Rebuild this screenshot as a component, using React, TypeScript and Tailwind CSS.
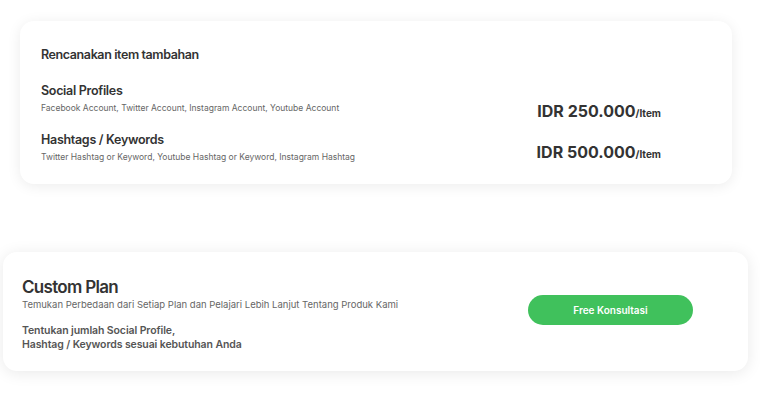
import React from 'react';

const addons = [
  {
    title: 'Social Profiles',
    desc: 'Facebook Account, Twitter Account, Instagram Account, Youtube Account',
    price: 'IDR 250.000',
  },
  {
    title: 'Hashtags / Keywords',
    desc: 'Twitter Hashtag or Keyword, Youtube Hashtag or Keyword, Instagram Hashtag',
    price: 'IDR 500.000',
  },
];

const App: React.FC = () => {
  return (
    <div className="w-[760px] h-[414px] bg-white overflow-hidden font-['Inter',sans-serif] text-[#333]">
      <div className="pt-[21px] pl-[20px]">
        <div className="w-[712px] h-[163px] bg-white rounded-[14px] shadow-[0_2px_14px_rgba(0,0,0,0.08)] pl-[21px] pt-[26px]">
          <h3 className="text-[12.5px] font-semibold leading-[16px] tracking-[-0.4px] text-[#333]">Rencanakan item tambahan</h3>
          <div className="flex">
            <div className="w-[474px] mt-[20px] flex flex-col gap-[18px]">
              {addons.map((a) => (
                <div key={a.title}>
                  <p className="text-[12.5px] font-semibold leading-[16px] tracking-[-0.3px] text-[#333]">{a.title}</p>
                  <p className="mt-[3px] text-[8.5px] leading-[12px] text-[#666]">{a.desc}</p>
                </div>
              ))}
            </div>
            <div className="w-[146px] mt-[37px] flex flex-col items-end gap-[17px]">
              {addons.map((a) => (
                <p key={a.price} className="leading-[22px] whitespace-nowrap">
                  <span className="text-[16px] font-bold text-[#333]">{a.price}</span>
                  <span className="text-[10px] font-bold text-[#333]">/Item</span>
                </p>
              ))}
            </div>
          </div>
        </div>
      </div>
      <div className="mt-[68px] pl-[3px]">
        <div className="w-[745px] h-[119px] bg-white rounded-[14px] shadow-[0_2px_16px_rgba(0,0,0,0.09)] pl-[19px] pt-[24px] flex">
          <div className="w-[506px]">
            <h2 className="text-[17px] font-semibold leading-[22px] tracking-[-0.7px] text-[#333]">Custom Plan</h2>
            <p className="text-[9.5px] leading-[13px] text-[#666]">
              Temukan Perbedaan dari Setiap Plan dan Pelajari Lebih Lanjut Tentang Produk Kami
            </p>
            <p className="mt-[13px] text-[10.5px] font-semibold leading-[14px] tracking-[-0.1px] text-[#555]">
              Tentukan jumlah Social Profile,
              <br />
              Hashtag / Keywords sesuai kebutuhan Anda
            </p>
          </div>
          <div className="pt-[19px]">
            <button className="w-[165px] h-[30px] rounded-full bg-[#40c15c] text-white text-[10px] font-semibold">
              Free Konsultasi
            </button>
          </div>
        </div>
      </div>
    </div>
  );
};

export default App;
